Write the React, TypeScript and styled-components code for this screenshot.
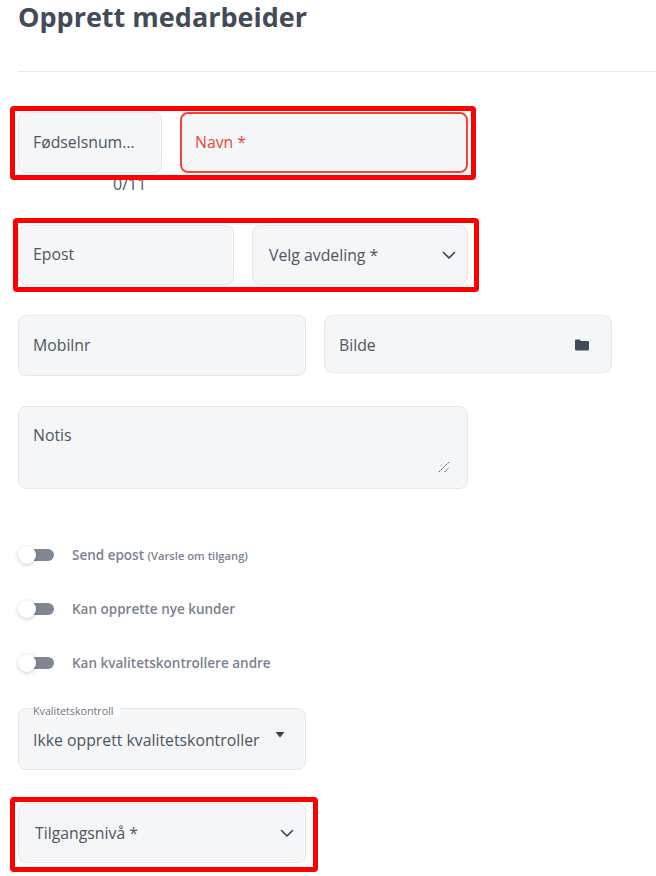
import React from "react";
import styled, { createGlobalStyle } from "styled-components";

const Global = createGlobalStyle`
  html, body { margin: 0; padding: 0; background: #fff; }
  body { font-family: "Open Sans", "Liberation Sans", sans-serif; color: #374151; overflow: hidden; }
`;

const Page = styled.div`
  width: 656px;
  height: 876px;
  padding-left: 18px;
  box-sizing: border-box;
  overflow: hidden;
`;

const Title = styled.h1`
  margin: 0;
  height: 71px;
  font-size: 27px;
  line-height: 34px;
  font-weight: 700;
  color: #424b57;
`;

const Divider = styled.hr`
  margin: 0 0 40px;
  border: 0;
  border-top: 1px solid #e5e7eb;
`;

const Row = styled.div<{ $mb: number }>`
  position: relative;
  display: flex;
  align-items: flex-start;
  gap: 18px;
  margin-bottom: ${(p) => p.$mb}px;
`;

const Highlight = styled.div<{ $t: number; $r: number; $b: number; $l: number }>`
  position: absolute;
  top: ${(p) => p.$t}px;
  right: ${(p) => p.$r}px;
  bottom: ${(p) => p.$b}px;
  left: ${(p) => p.$l}px;
  border: 5px solid #fe0000;
  border-radius: 4px;
  pointer-events: none;
  z-index: 2;
`;

const Field = styled.div<{ $w: number; $h: number; $error?: boolean }>`
  position: relative;
  box-sizing: border-box;
  width: ${(p) => p.$w}px;
  height: ${(p) => p.$h}px;
  display: flex;
  align-items: center;
  justify-content: space-between;
  padding: 0 ${(p) => (p.$error ? 13 : 14)}px;
  background: #f5f6f8;
  border: ${(p) => (p.$error ? "2px solid #f0443e" : "1px solid #e5e7eb")};
  border-radius: 8px;
  color: ${(p) => (p.$error ? "#f0443e" : "#4b5563")};
  font-size: 15.8px;
`;

const Placeholder = styled.span<{ $shift?: number; $dy?: number }>`
  min-width: 0;
  overflow: hidden;
  white-space: nowrap;
  text-overflow: ellipsis;
  margin-left: ${(p) => p.$shift ?? 0}px;
  margin-top: ${(p) => Math.max(p.$dy ?? 0, 0)}px;
  margin-bottom: ${(p) => Math.max(-(p.$dy ?? 0), 0)}px;
`;

const Counter = styled.div`
  position: absolute;
  top: 62px;
  left: 95px;
  font-size: 16px;
  line-height: 20px;
  color: #4b5563;
`;

const Notes = styled(Field)`
  align-items: flex-start;
  padding-top: 17px;
  line-height: 22px;
`;

const Resizer = styled.svg`
  position: absolute;
  right: 17px;
  bottom: 15px;
  width: 12px;
  height: 12px;
`;

const Toggles = styled.div`
  display: flex;
  flex-direction: column;
  gap: 36px;
  margin: 57px 0 36px;
`;

const ToggleRow = styled.div`
  display: flex;
  align-items: center;
  height: 18px;
  gap: 18px;
`;

const Track = styled.div`
  position: relative;
  width: 36px;
  height: 18px;
  flex: none;
  &::before {
    content: "";
    position: absolute;
    left: 12px;
    right: 0;
    top: 3px;
    height: 12px;
    background: #7f8795;
    border-radius: 0 6px 6px 0;
  }
  &::after {
    content: "";
    position: absolute;
    left: 0;
    top: 0;
    width: 18px;
    height: 18px;
    border-radius: 50%;
    background: #fff;
    box-shadow: 0 1px 4px rgba(0, 0, 0, 0.2);
  }
`;

const ToggleLabel = styled.span`
  font-size: 13.5px;
  font-weight: 600;
  color: #7b828f;
  white-space: nowrap;
`;

const Small = styled.small`
  font-size: 11.2px;
`;

const FloatLabel = styled.span`
  position: absolute;
  left: 14px;
  top: -4px;
  padding-right: 6px;
  font-size: 10.7px;
  line-height: 12px;
  color: #6b7280;
  background: #fff;
`;

const SelectChevron = styled.svg`
  flex: none;
  margin-right: -4px;
`;

const Chevron = () => (
  <SelectChevron width="16" height="16" viewBox="0 0 16 16" fill="none" stroke="#374151" strokeWidth="1.6" strokeLinecap="round" strokeLinejoin="round">
    <path d="M2.5 5.5 8 11l5.5-5.5" />
  </SelectChevron>
);

const FolderIcon = styled.svg`
  flex: none;
  margin: 1px 8px 0 0;
`;

const Folder = () => (
  <FolderIcon width="14" height="14" viewBox="0 0 14 14" fill="#424b57">
    <path d="M0 2.6C0 2 .5 1.5 1.1 1.5h3.6l1.4 1.4h6.7c.6 0 1.2.5 1.2 1.2v7.2c0 .6-.5 1.2-1.2 1.2H1.2C.5 12.5 0 12 0 11.3z" />
  </FolderIcon>
);

const CaretIcon = styled.svg`
  flex: none;
  margin: 0 6px 8px 0;
`;

const Caret = () => (
  <CaretIcon width="10" height="6" viewBox="0 0 10 6" fill="#374151">
    <path d="M0.5 0h9L5 5.5z" />
  </CaretIcon>
);

export default function App() {
  return (
    <Page>
      <Global />
      <Title>Opprett medarbeider</Title>
      <Divider />
      <Row $mb={52}>
        <Highlight $t={-6} $r={180} $b={-7} $l={-8} />
        <Field $w={144} $h={61}>
          <Placeholder $dy={-1}>Fødselsnummer</Placeholder>
        </Field>
        <Counter>0/11</Counter>
        <Field $w={288} $h={61} $error>
          <Placeholder $dy={-1}>Navn *</Placeholder>
        </Field>
      </Row>
      <Row $mb={30}>
        <Highlight $t={-7} $r={177} $b={-7} $l={-5} />
        <Field $w={216} $h={60}>
          <Placeholder $dy={-2}>Epost</Placeholder>
        </Field>
        <Field $w={216} $h={60}>
          <Placeholder $shift={2}>Velg avdeling *</Placeholder>
          <Chevron />
        </Field>
      </Row>
      <Row $mb={30}>
        <Field $w={288} $h={61}>
          <Placeholder $dy={-1}>Mobilnr</Placeholder>
        </Field>
        <Field $w={288} $h={58}>
          <Placeholder $dy={2}>Bilde</Placeholder>
          <Folder />
        </Field>
      </Row>
      <Row $mb={0}>
        <Notes $w={450} $h={83}>
          <Placeholder>Notis</Placeholder>
          <Resizer viewBox="0 0 12 12" fill="none" stroke="#555" strokeWidth="1">
            <path d="M1 11 11 1M6.5 11 11 6.5" strokeDasharray="2 1" />
          </Resizer>
        </Notes>
      </Row>
      <Toggles>
        <ToggleRow>
          <Track />
          <ToggleLabel>
            Send epost <Small>(Varsle om tilgang)</Small>
          </ToggleLabel>
        </ToggleRow>
        <ToggleRow>
          <Track />
          <ToggleLabel>Kan opprette nye kunder</ToggleLabel>
        </ToggleRow>
        <ToggleRow>
          <Track />
          <ToggleLabel>Kan kvalitetskontrollere andre</ToggleLabel>
        </ToggleRow>
      </Toggles>
      <Row $mb={33}>
        <Field $w={288} $h={62}>
          <FloatLabel>Kvalitetskontroll</FloatLabel>
          <Placeholder $dy={2}>Ikke opprett kvalitetskontroller</Placeholder>
          <Caret />
        </Field>
      </Row>
      <Row $mb={0}>
        <Highlight $t={-6} $r={338} $b={-9} $l={-8} />
        <Field $w={288} $h={60}>
          <Placeholder $shift={2}>Tilgangsnivå *</Placeholder>
          <Chevron />
        </Field>
      </Row>
    </Page>
  );
}
